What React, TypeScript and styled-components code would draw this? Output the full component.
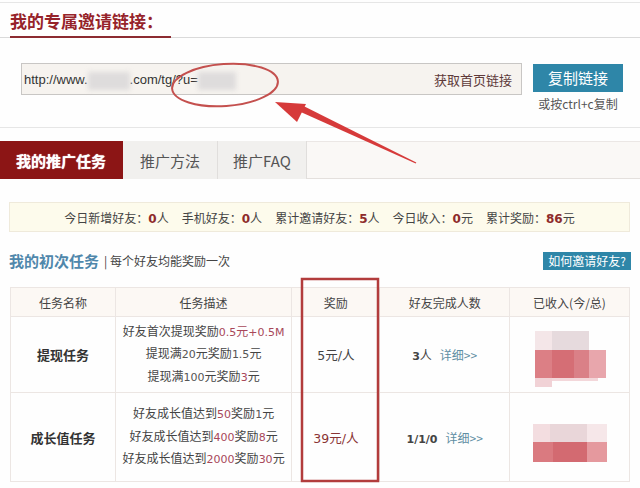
import React from "react";
import styled, { createGlobalStyle } from "styled-components";

const Global = createGlobalStyle`
  html, body { margin: 0; padding: 0; background: #ffffff; }
  * { box-sizing: border-box; }
`;

const CJK = `"Noto Sans CJK SC", "Noto Sans", sans-serif`;
const NUM = `"DejaVu Sans", "Noto Sans CJK SC", sans-serif`;

const Page = styled.div`
  position: relative;
  width: 640px;
  height: 488px;
  overflow: hidden;
  background: #fefefe;
  font-family: ${CJK};
  color: #444;
`;

const TopRule = styled.div`
  height: 3px;
  border-bottom: 1px solid #e6e6e6;
`;

const TitleBar = styled.div`
  display: flex;
  align-items: flex-end;
  height: 35px;
  border-bottom: 1px solid #dadada;
`;

const Title = styled.h2`
  margin: 0 0 -1px 10px;
  padding-right: 8px;
  font-size: 17px;
  font-weight: 700;
  line-height: 30px;
  color: #96232a;
  border-bottom: 2px solid #8c2b31;
`;

const LinkSection = styled.div`
  display: flex;
  align-items: flex-start;
  height: 90px;
  padding: 25px 0 0 21px;
  border-bottom: 1px solid #e6e6e6;
`;

const UrlBox = styled.div`
  display: flex;
  align-items: center;
  justify-content: space-between;
  width: 501px;
  height: 32px;
  padding: 0 9px 0 2px;
  border: 1px solid #c8c6c4;
  background: #f6f3ef;
`;

const UrlText = styled.span`
  display: flex;
  align-items: center;
  font-family: "Liberation Sans", Arial, sans-serif;
  font-size: 13px;
  color: #333;
`;

const Smudge = styled.span<{ $w: number }>`
  display: inline-block;
  width: ${(p) => p.$w}px;
  height: 18px;
  background: #dedcdc;
  filter: blur(2.5px);
  margin-top: 4px;
`;

const HomeLink = styled.span`
  font-size: 13px;
  color: #5e3a3a;
`;

const CopyGroup = styled.div`
  display: flex;
  flex-direction: column;
  align-items: center;
  margin-left: 11px;
  margin-top: 1px;
`;

const BlueButton = styled.div<{ $size: number; $h: number; $pad: number }>`
  height: ${(p) => p.$h}px;
  line-height: ${(p) => p.$h}px;
  padding: 0 ${(p) => p.$pad}px;
  background: #2e86a8;
  color: #ffffff;
  font-size: ${(p) => p.$size}px;
  white-space: nowrap;
`;

const Hint = styled.div`
  margin-top: 4px;
  font-size: 12px;
  line-height: 16px;
  color: #555;
`;

const TabBar = styled.div`
  display: flex;
  height: 38px;
  margin-top: 13px;
  border-top: 1px solid #ebe7e5;
  border-bottom: 1px solid #e4e0dd;
  background: #faf8f6;
`;

const Tab = styled.div<{ $active?: boolean; $pad: number }>`
  display: flex;
  align-items: center;
  padding: 0 ${(p) => p.$pad}px;
  margin-top: -1px;
  margin-bottom: -1px;
  font-size: 15px;
  font-weight: ${(p) => (p.$active ? 700 : 400)};
  color: ${(p) => (p.$active ? "#ffffff" : "#555")};
  background: ${(p) => (p.$active ? "#8c1515" : "#f1f0ee")};
  border-right: 1px solid ${(p) => (p.$active ? "#8c1515" : "#e0dedc")};
  text-shadow: ${(p) => (p.$active ? "0 0 1px #fff" : "none")};
`;

const StatsBar = styled.div`
  display: flex;
  align-items: center;
  justify-content: center;
  gap: 13px;
  height: 30px;
  margin: 23px 10px 0 9px;
  border: 1px solid #efeadb;
  background: #fdfbec;
  font-size: 12px;
  color: #444;
`;

const Value = styled.b`
  font-family: ${NUM};
  font-size: 12px;
  color: #8e2b2b;
`;

const SectionHead = styled.div`
  display: flex;
  align-items: center;
  justify-content: space-between;
  height: 19px;
  margin-top: 19px;
  padding: 0 9px 0 9px;
`;

const SectionTitle = styled.div`
  display: flex;
  align-items: center;
  gap: 5px;
`;

const BlueTitle = styled.span`
  font-size: 15px;
  font-weight: 700;
  color: #4f87ab;
`;

const SubTitle = styled.span`
  font-size: 12px;
  color: #444;
`;

const Table = styled.table`
  width: 620px;
  margin: 17px 10px 0 10px;
  border-collapse: collapse;
  border: 1px solid #ece6e3;
  font-size: 12px;
  color: #444;
`;

const Th = styled.th<{ $w: number }>`
  width: ${(p) => p.$w}px;
  height: 29px;
  padding: 0;
  font-weight: 400;
  background: #fcf8f4;
  border: 1px solid #ece6e3;
  text-align: center;
`;

const Td = styled.td<{ $h: number }>`
  height: ${(p) => p.$h}px;
  padding: 0;
  border: 1px solid #ece6e3;
  text-align: center;
  vertical-align: middle;
  background: #fefefe;
`;

const TaskName = styled.b`
  font-size: 13px;
  color: #333;
`;

const DescLine = styled.div`
  line-height: 20.5px;
  color: #444;
`;

const Num = styled.span<{ $hot?: boolean }>`
  font-family: ${NUM};
  font-size: 11px;
  color: ${(p) => (p.$hot ? "#a8485a" : "#555")};
`;

const Reward = styled.span<{ $hot?: boolean }>`
  font-size: 12.5px;
  color: ${(p) => (p.$hot ? "#8a3434" : "#444")};
  font-family: ${NUM};
`;

const Count = styled.b`
  font-family: ${NUM};
  font-size: 11px;
  color: #444;
`;

const Detail = styled.span`
  margin-left: 8px;
  color: #5f8ea3;
  font-size: 12px;
`;

const MosaicWrap = styled.div<{ $dy: number }>`
  display: flex;
  justify-content: center;
  padding-top: ${(p) => p.$dy}px;
  padding-left: 2px;
`;

const Overlay = styled.svg`
  position: absolute;
  left: 0;
  top: 0;
  pointer-events: none;
`;

type Cell = { x: number; y: number; w: number; h: number; c: string };

const blob1: Cell[] = [
  { x: 0, y: 0, w: 17, h: 19, c: "#f4e6e8" },
  { x: 17, y: 0, w: 37, h: 19, c: "#e6dadd" },
  { x: 0, y: 19, w: 17, h: 28, c: "#dc7f85" },
  { x: 17, y: 19, w: 22, h: 28, c: "#d56e74" },
  { x: 39, y: 19, w: 15, h: 28, c: "#da8087" },
  { x: 54, y: 19, w: 17, h: 28, c: "#e8a6ac" },
  { x: 0, y: 47, w: 17, h: 9, c: "#f1d2d6" },
  { x: 17, y: 47, w: 46, h: 3, c: "#f3d7da" },
];

const blob2: Cell[] = [
  { x: 0, y: 0, w: 17, h: 18, c: "#f3dde0" },
  { x: 17, y: 0, w: 37, h: 18, c: "#e9d6d9" },
  { x: 54, y: 0, w: 20, h: 18, c: "#f6e7e9" },
  { x: 0, y: 18, w: 20, h: 20, c: "#da7a80" },
  { x: 20, y: 18, w: 34, h: 20, c: "#d36b71" },
  { x: 54, y: 18, w: 20, h: 20, c: "#e5999e" },
];

const Mosaic: React.FC<{ cells: Cell[]; w: number; h: number; dy: number }> = ({ cells, w, h, dy }) => (
  <MosaicWrap $dy={dy}>
    <svg width={w} height={h} viewBox={`0 0 ${w} ${h}`}>
      <defs>
        <filter id="soft" x="-10%" y="-10%" width="120%" height="120%">
          <feGaussianBlur stdDeviation="0.7" />
        </filter>
      </defs>
      <g filter="url(#soft)">
        {cells.map((c, i) => (
          <rect key={i} x={c.x} y={c.y} width={c.w} height={c.h} fill={c.c} />
        ))}
      </g>
    </svg>
  </MosaicWrap>
);

export default function App() {
  return (
    <>
      <Global />
      <Page>
        <TopRule />
        <TitleBar>
          <Title>我的专属邀请链接：</Title>
        </TitleBar>
        <LinkSection>
          <UrlBox>
            <UrlText>
              http://www.<Smudge $w={42} />.com/tg/?u=<Smudge $w={38} />
            </UrlText>
            <HomeLink>获取首页链接</HomeLink>
          </UrlBox>
          <CopyGroup>
            <BlueButton $size={15} $h={28} $pad={15}>复制链接</BlueButton>
            <Hint>或按ctrl+c复制</Hint>
          </CopyGroup>
        </LinkSection>

        <TabBar>
          <Tab $active $pad={16}>我的推广任务</Tab>
          <Tab $pad={17}>推广方法</Tab>
          <Tab $pad={15}>推广FAQ</Tab>
        </TabBar>

        <StatsBar>
          <span>今日新增好友：<Value>0</Value>人</span>
          <span>手机好友：<Value>0</Value>人</span>
          <span>累计邀请好友：<Value>5</Value>人</span>
          <span>今日收入：<Value>0</Value>元</span>
          <span>累计奖励：<Value>86</Value>元</span>
        </StatsBar>

        <SectionHead>
          <SectionTitle>
            <BlueTitle>我的初次任务</BlueTitle>
            <SubTitle>| 每个好友均能奖励一次</SubTitle>
          </SectionTitle>
          <BlueButton $size={12} $h={18} $pad={5}>如何邀请好友?</BlueButton>
        </SectionHead>

        <Table>
          <thead>
            <tr>
              <Th $w={105}>任务名称</Th>
              <Th $w={177}>任务描述</Th>
              <Th $w={88}>奖励</Th>
              <Th $w={130}>好友完成人数</Th>
              <Th $w={120}>已收入(今/总)</Th>
            </tr>
          </thead>
          <tbody>
            <tr>
              <Td $h={76}><TaskName>提现任务</TaskName></Td>
              <Td $h={76}>
                <DescLine>好友首次提现奖励<Num $hot>0.5</Num><span style={{ color: "#a8485a" }}>元</span><Num $hot>+0.5M</Num></DescLine>
                <DescLine>提现满<Num>20</Num>元奖励<Num>1.5</Num>元</DescLine>
                <DescLine>提现满<Num>100</Num>元奖励<Num $hot>3</Num>元</DescLine>
              </Td>
              <Td $h={76}><Reward>5元/人</Reward></Td>
              <Td $h={76}><Count>3</Count>人<Detail>详细&gt;&gt;</Detail></Td>
              <Td $h={76}><Mosaic cells={blob1} w={72} h={56} dy={8} /></Td>
            </tr>
            <tr>
              <Td $h={89}><TaskName>成长值任务</TaskName></Td>
              <Td $h={89}>
                <DescLine>好友成长值达到<Num $hot>50</Num>奖励<Num>1</Num>元</DescLine>
                <DescLine>好友成长值达到<Num $hot>400</Num>奖励<Num $hot>8</Num>元</DescLine>
                <DescLine>好友成长值达到<Num $hot>2000</Num>奖励<Num $hot>30</Num>元</DescLine>
              </Td>
              <Td $h={89}><Reward $hot>39元/人</Reward></Td>
              <Td $h={89}><Count>1/1/0</Count><Detail>详细&gt;&gt;</Detail></Td>
              <Td $h={89}><Mosaic cells={blob2} w={75} h={38} dy={12} /></Td>
            </tr>
          </tbody>
        </Table>

        <Overlay width={640} height={488} viewBox="0 0 640 488">
          <ellipse cx={225} cy={85} rx={53} ry={21} fill="none" stroke="#c4504e" strokeWidth={2} transform="rotate(-4 225 85)" />
          <polygon points="275,102 306,104 297,122" fill="#d63a3a" />
          <polygon points="301.5,105 416.3,162.5 415.7,163.5 298.5,111" fill="#d63a3a" />
          <rect x={302} y={279} width={76} height={202} fill="none" stroke="#b23c3c" strokeWidth={2.5} />
        </Overlay>
      </Page>
    </>
  );
}
